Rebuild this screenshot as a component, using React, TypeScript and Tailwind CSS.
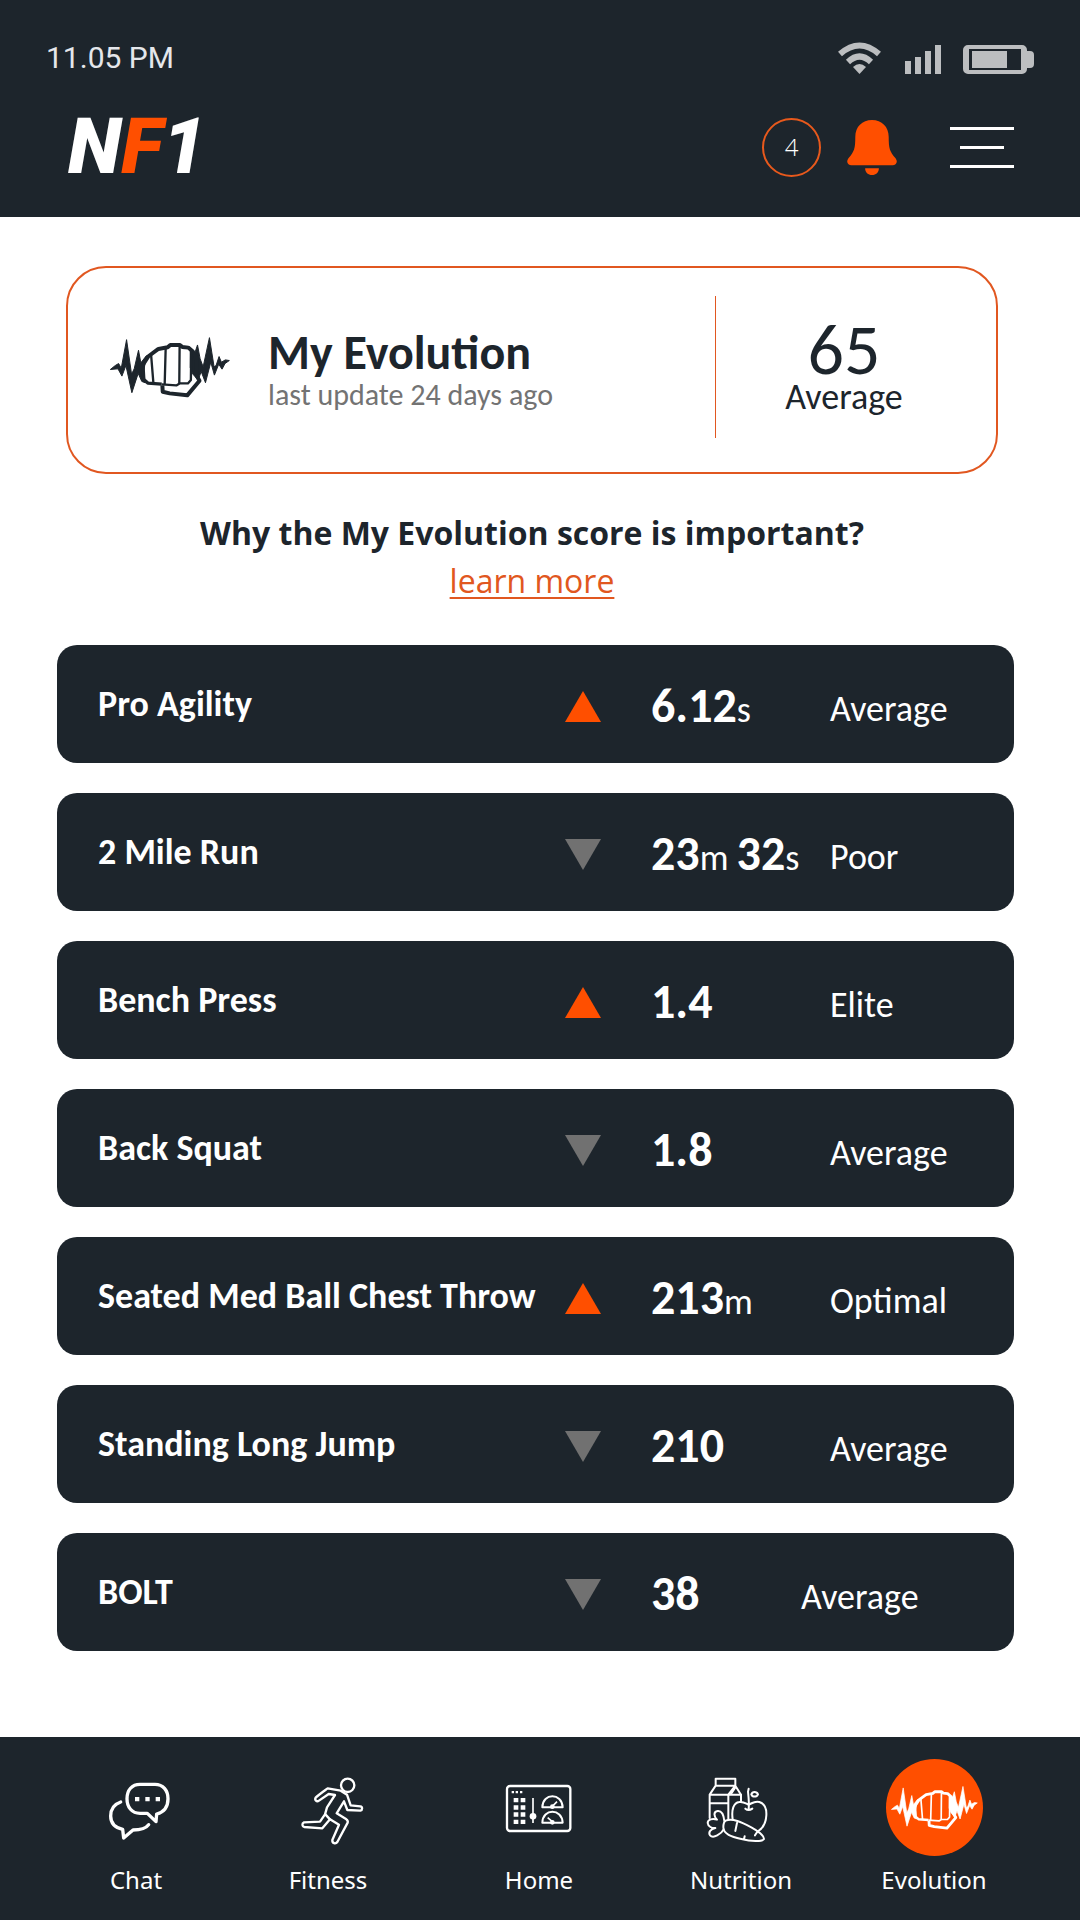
import React from "react";
import clsx from "clsx";

type Part = { value: string; unit?: string };

type Metric = {
  name: string;
  trend: "up" | "down";
  parts: Part[];
  rating: string;
  compact?: boolean;
};

const metrics: Metric[] = [
  { name: "Pro Agility", trend: "up", parts: [{ value: "6.12", unit: "s" }], rating: "Average" },
  {
    name: "2 Mile Run",
    trend: "down",
    parts: [
      { value: "23", unit: "m" },
      { value: "32", unit: "s" },
    ],
    rating: "Poor",
  },
  { name: "Bench Press", trend: "up", parts: [{ value: "1.4" }], rating: "Elite" },
  { name: "Back Squat", trend: "down", parts: [{ value: "1.8" }], rating: "Average" },
  {
    name: "Seated Med Ball Chest Throw",
    trend: "up",
    parts: [{ value: "213", unit: "m" }],
    rating: "Optimal",
  },
  { name: "Standing Long Jump", trend: "down", parts: [{ value: "210" }], rating: "Average" },
  { name: "BOLT", trend: "down", parts: [{ value: "38" }], rating: "Average", compact: true },
];

const FistIcon = ({ className }: { className?: string }) => (
  <svg viewBox="32 48 362 184" className={className} fill="none" stroke="currentColor" aria-hidden="true">
    <path
      fill="currentColor"
      strokeWidth="3"
      d="M33 146 48 134 58 128 66 142 82 56 97 160 105 144 118 88 125 126 142 104 134 150 138 186 128 182 117 158 98 216 80 134 68 166 56 144Z"
    />
    <path
      fill="currentColor"
      strokeWidth="3"
      d="M274 88 288 96 296 72 304 114 313 138 332 50 346 138 352 134 361 107 368 124 380 117 392 119 379 128 370 145 360 130 347 163 336 124 320 186 307 152 298 178 282 160 274 140Z"
    />
    <path
      strokeWidth="12"
      strokeLinejoin="round"
      d="M130 134 148 106 178 84 206 79 214 72 242 72 250 78 268 80 282 92 292 112 294 166 302 180 265 224 212 218 191 213 190 194"
    />
    <path strokeWidth="10" strokeLinejoin="round" d="M131 124 134 176 146 187 188 190" />
    <path strokeWidth="7" strokeLinejoin="round" d="M188 191 232 194 242 188 267 188 276 178 277 90" />
    <path strokeWidth="7" d="M156 102 163 188M200 80 197 190M242 76 241 188" />
  </svg>
);

const StatusIcons = () => (
  <div className="flex items-end text-[#bcbec0]">
    <svg viewBox="0 0 43 32" className="h-8 w-[43px]" fill="none" stroke="currentColor" aria-label="Wi-Fi">
      <path strokeWidth="6" d="M2 12Q21.500-5 41 12" />
      <path strokeWidth="6" d="M10 20Q21.500 9 33 20" />
      <path fill="currentColor" stroke="none" d="M15 25Q21.500 19 28 25L21.500 32Z" />
    </svg>
    <svg viewBox="0 0 36 29" className="ml-6 h-[29px] w-9" fill="currentColor" aria-label="Signal">
      <path d="M0 16h6v13H0zM10 12h6v17h-6zM20 6h6v23h-6zM30 0h6v29h-6z" />
    </svg>
    <svg viewBox="0 0 71 29" className="ml-[22px] h-[29px] w-[71px]" fill="currentColor" aria-label="Battery">
      <path
        fillRule="evenodd"
        d="M5 0h54a5 5 0 0 1 5 5v1h3a4 4 0 0 1 4 4v9a4 4 0 0 1-4 4h-3v1a5 5 0 0 1-5 5H5a5 5 0 0 1-5-5V5a5 5 0 0 1 5-5ZM6 4v21h52V4Z"
      />
      <path d="M9 6h35v17H9z" />
    </svg>
  </div>
);

const BellIcon = () => (
  <svg viewBox="0 0 50 56" className="h-[55px] w-[50px]" fill="#ff4f00" aria-hidden="true">
    <path d="M25 0C35 0 42 7 42 17c0 12 1 15 7 22 3 4 0 7-3 7H4c-3 0-6-3-3-7 6-7 7-10 7-22C8 7 15 0 25 0Z" />
    <path d="M18 49h14c0 4-3 7-7 7s-7-3-7-7Z" />
  </svg>
);

const Header = () => (
  <header className="bg-[#1d252c] pb-10 pt-[39px] text-white">
    <div className="flex h-[37px] items-center justify-between px-[46px]">
      <span className="font-[Roboto,sans-serif] text-[30px] leading-[37px] text-gray-200">11.05 PM</span>
      <StatusIcons />
    </div>
    <div className="mt-[41px] flex h-[60px] items-center justify-between pl-[68px] pr-[66px]">
      <a href="#home" className="font-[Roboto,sans-serif] text-[78px] font-black italic leading-[60px]">
        N<span className="text-[#ff4f00]">F</span>1
      </a>
      <div className="flex items-center">
        <span className="flex size-[59px] items-center justify-center rounded-full border-2 border-[#e8591c] font-['Open_Sans',sans-serif] text-2xl font-light">
          4
        </span>
        <button type="button" aria-label="Notifications" className="ml-[26px]">
          <BellIcon />
        </button>
        <button type="button" aria-label="Menu" className="ml-[53px] flex flex-col items-center gap-4">
          <span className="h-[3px] w-16 bg-white" />
          <span className="h-[3px] w-11 bg-white" />
          <span className="h-[3px] w-16 bg-white" />
        </button>
      </div>
    </div>
  </header>
);

const ScoreCard = () => (
  <section className="ml-[9px] mr-4 flex h-[208px] items-center rounded-[40px] border-2 border-[#e15720] pb-1.5 pl-[42px]">
    <FistIcon className="h-[61px] w-[120px] text-[#1d252c]" />
    <div className="ml-[38px] flex-1 pt-1">
      <h1 className="text-5xl font-bold leading-[52px]">My Evolution</h1>
      <p className="text-[30px] leading-8 text-[#737373]">last update 24 days ago</p>
    </div>
    <div className="h-[142px] w-px bg-[#e15720]" />
    <div className="w-[280px] pr-6 text-center">
      <p className="text-7xl leading-[60px]">65</p>
      <p className="text-4xl leading-9">Average</p>
    </div>
  </section>
);

const MetricRow = ({ metric }: { metric: Metric }) => (
  <li
    className={clsx(
      "grid h-[118px] items-center rounded-[20px] bg-[#1d252c] pl-[41px] text-white",
      metric.compact ? "grid-cols-[1fr_36px_200px_213px]" : "grid-cols-[1fr_36px_229px_184px]"
    )}
  >
    <h3 className="whitespace-nowrap text-4xl font-bold leading-9">{metric.name}</h3>
    <svg
      viewBox="0 0 36 31"
      className={clsx("mt-1 h-[31px] w-9", metric.trend === "up" ? "text-[#ff4f00]" : "text-[#717171]")}
      fill="currentColor"
      role="img"
      aria-label={metric.trend}
    >
      <path d={metric.trend === "up" ? "M18 0 36 31H0Z" : "M0 0H36L18 31Z"} />
    </svg>
    <p className="whitespace-nowrap pl-[50px] pt-2 text-4xl leading-[54px]">
      {metric.parts.map((part, i) => (
        <React.Fragment key={part.value}>
          {i > 0 && " "}
          <span className="text-5xl font-bold leading-[54px]">{part.value}</span>
          {part.unit}
        </React.Fragment>
      ))}
    </p>
    <p className="pt-2.5 text-4xl leading-9">{metric.rating}</p>
  </li>
);

const ChatIcon = () => (
  <svg viewBox="-7 -3 291 291" className="size-[97px]" fill="none" stroke="#fff" strokeWidth="10" strokeLinecap="round" strokeLinejoin="round" aria-hidden="true">
    <path d="M149 73h45c24 0 39 18 39 43s-12 40-34 46l-2 23-26-25h-22c-24 0-39-18-39-44s15-43 39-43Z" />
    <path d="M91 126c-20 7-30 23-30 42 0 20 13 35 36 40l3 26 28-24c22 0 38-3 47-16" />
    <path fill="#fff" stroke="none" d="M134 111h13v13h-13zM165 111h13v13h-13zM196 111h13v13h-13z" />
  </svg>
);

const RunIcon = () => (
  <svg viewBox="568 -3 291 291" className="size-[97px]" fill="none" stroke="#fff" strokeWidth="7" strokeLinecap="round" strokeLinejoin="round" aria-hidden="true">
    <circle cx="771" cy="76" r="20" />
    <path d="M750 92 711 85C700 93 684 104 675 113 671 120 678 127 685 122L714 102 733 105 709 142 703 163 688 185 640 187C633 190 634 200 641 201L695 205 718 178 745 194 725 240C724 250 735 253 740 246L771 188C773 182 770 180 766 177L738 160 760 124 770 150 809 152C816 150 816 140 809 139L780 136 769 104Z" />
    <path d="M704 163 718 178" />
  </svg>
);

const DashboardIcon = () => (
  <svg viewBox="31 -3 291 291" className="size-[97px]" fill="none" stroke="#fff" aria-hidden="true">
    <rect x="79" y="78" width="190" height="135" rx="9" strokeWidth="7" />
    <path
      fill="#fff"
      stroke="none"
      d="M93 93h7v7h-7zM105 93h7v7h-7zM118 93h7v7h-7zM99 114h14v13H99zM120 114h14v13h-14zM99 136h14v13H99zM120 136h14v13h-14zM99 157h14v13H99zM120 157h14v13h-14zM99 179h14v13H99zM120 179h14v13h-14z"
    />
    <path strokeWidth="5" d="M157 114V189" />
    <circle cx="157" cy="169" r="10" fill="#fff" stroke="none" />
    <path strokeWidth="6" strokeLinejoin="round" d="M185 142C186 98 244 98 246 142ZM185 188C186 144 244 144 246 188Z" />
    <path strokeWidth="5" d="M215 139 229 125M215 185 201 173" />
    <circle cx="215" cy="140" r="7" fill="#fff" stroke="none" />
    <circle cx="215" cy="187" r="7" fill="#fff" stroke="none" />
  </svg>
);

const NutritionIcon = () => (
  <svg viewBox="637 -3 291 291" className="size-[97px]" fill="none" stroke="#fff" strokeWidth="6" strokeLinecap="round" strokeLinejoin="round" aria-hidden="true">
    <path d="M705 56H764V77H705ZM705 77 687 104V174M764 77 781 104V124M687 104H743L764 77M743 104V176M687 130H743M752 100 763 84" />
    <path d="M743 104H781" />
    <path d="M804 147C806 125 803 106 802 95L804 86M794 146C800 151 808 151 815 146" />
    <path d="M756 178C752 150 758 128 776 126 790 124 797 132 804 134 814 130 822 122 836 126 852 131 858 148 857 166 856 184 850 202 833 213" />
    <path d="M812 103C815 94 828 94 832 103 828 112 815 112 812 103Z" />
    <path d="M735 182C756 174 782 186 812 202 830 212 850 225 850 237 845 246 810 244 782 237 752 230 728 222 728 202 728 192 729 186 735 182ZM769 189 764 213M792 229 790 237M830 215 823 226" />
    <path d="M731 183C729 164 722 152 711 153 698 154 699 170 709 179 696 174 681 178 681 189 682 200 694 205 704 204 690 207 682 216 688 226 698 237 722 222 729 208" />
  </svg>
);

const EvolutionBadge = () => (
  <span className="flex size-[97px] items-center justify-center rounded-full bg-[#ff4f00]">
    <FistIcon className="h-11 w-[87px] text-white" />
  </span>
);

const tabs = [
  { label: "Chat", icon: <ChatIcon /> },
  { label: "Fitness", icon: <RunIcon /> },
  { label: "Home", icon: <DashboardIcon /> },
  { label: "Nutrition", icon: <NutritionIcon /> },
  { label: "Evolution", icon: <EvolutionBadge /> },
];

const TabBar = () => (
  <nav className="grid grid-cols-[192fr_192fr_230fr_174fr_212fr] bg-[#1d252c] px-10 pb-4 pt-[22px] font-['Noto_Sans',sans-serif] text-2xl leading-[48px] text-white">
    {tabs.map((tab) => (
      <a key={tab.label} href={`#${tab.label.toLowerCase()}`} className="flex flex-col items-center">
        {tab.icon}
        {tab.label}
      </a>
    ))}
  </nav>
);

const App = () => {
  return (
    <div className="flex min-h-screen flex-col bg-white font-[Carlito,Lato,sans-serif] text-[#1d252c]">
      <Header />
      <main className="flex-1 pb-[85px] pl-[57px] pr-[66px] pt-[49px]">
        <ScoreCard />
        <div className="mb-10 mr-[7px] mt-[35px] text-center font-['Open_Sans',sans-serif] text-[32px] leading-[48px]">
          <h2 className="font-bold">Why the My Evolution score is important?</h2>
          <a href="#learn-more" className="text-[#e15720] underline decoration-2 underline-offset-4">
            learn more
          </a>
        </div>
        <ul className="flex flex-col gap-[30px]">
          {metrics.map((metric) => (
            <MetricRow key={metric.name} metric={metric} />
          ))}
        </ul>
      </main>
      <TabBar />
    </div>
  );
};

export default App;
